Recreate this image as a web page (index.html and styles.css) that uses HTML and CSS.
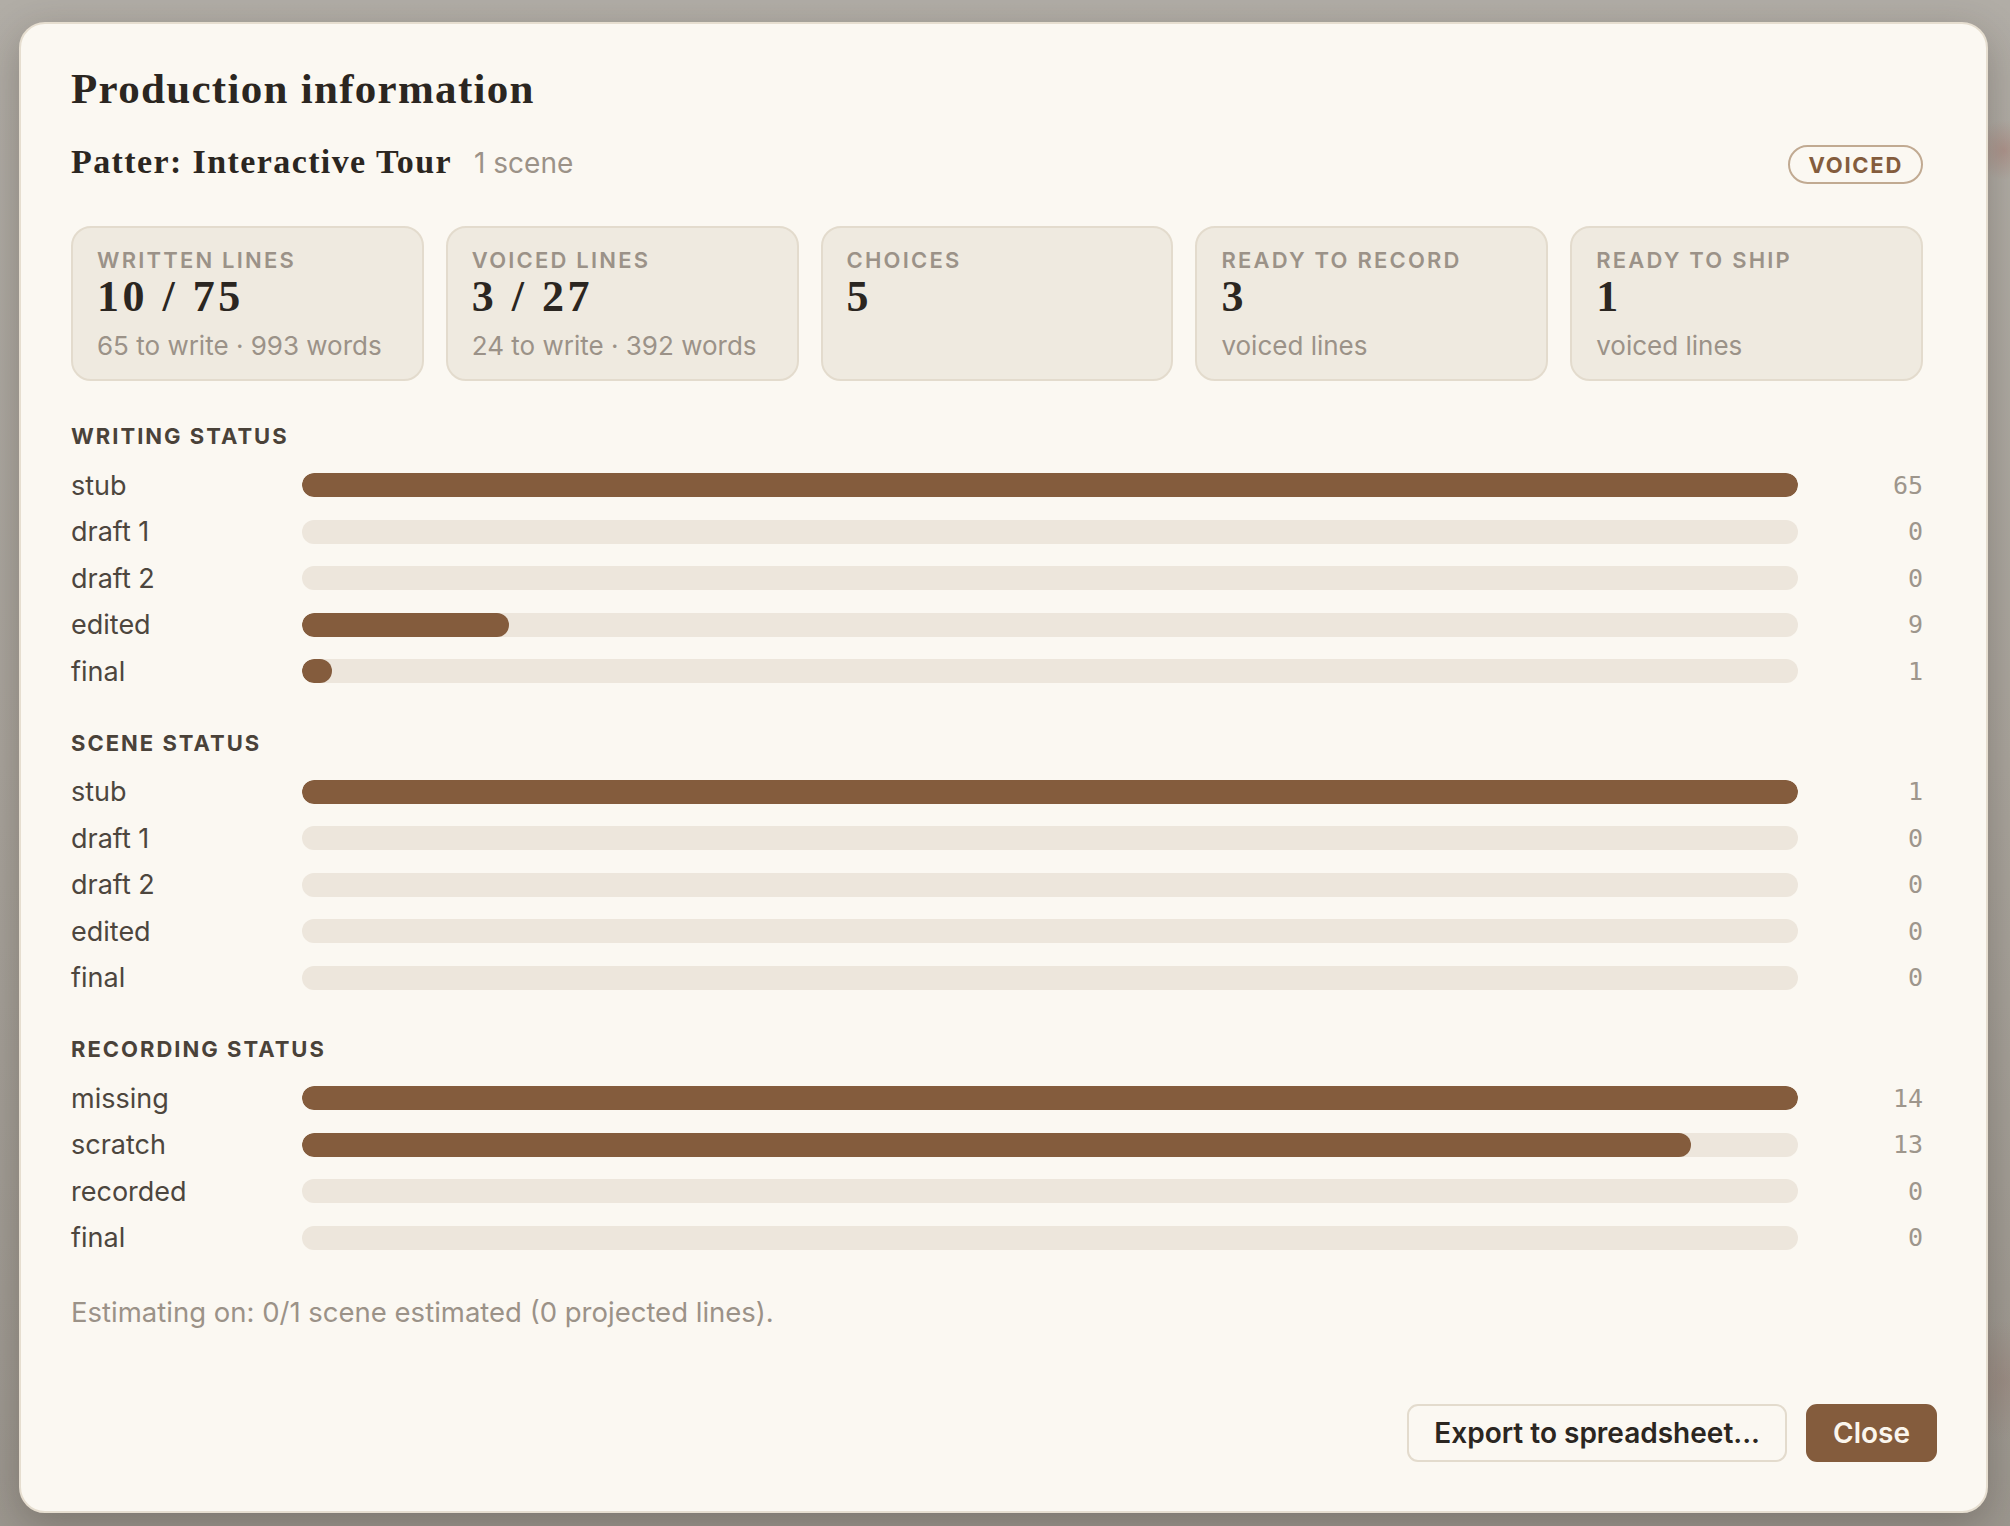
FILE: index.html
```html
<!DOCTYPE html>
<html lang="en">
<head>
    <meta charset="UTF-8">
    <meta name="viewport" content="width=device-width, initial-scale=1.0">
    <title>Production information</title>
    <link rel="stylesheet" href="styles.css">
</head>
<body>

    <div class="backdrop">
        <div class="dialog">
            <div class="dialog-body">
                <h1>Production information</h1>

                <!-- Project line -->
                <div class="project-row">
                    <div class="project">
                        <span class="project-name">Patter: Interactive Tour</span>
                        <span class="project-meta">1 scene</span>
                    </div>
                    <span class="badge">VOICED</span>
                </div>

                <!-- Summary cards -->
                <div class="cards">
                    <div class="card">
                        <div class="card-label">Written lines</div>
                        <div class="card-value">10 / 75</div>
                        <div class="card-sub">65 to write · 993 words</div>
                    </div>
                    <div class="card">
                        <div class="card-label">Voiced lines</div>
                        <div class="card-value">3 / 27</div>
                        <div class="card-sub">24 to write · 392 words</div>
                    </div>
                    <div class="card">
                        <div class="card-label">Choices</div>
                        <div class="card-value">5</div>
                    </div>
                    <div class="card">
                        <div class="card-label">Ready to record</div>
                        <div class="card-value">3</div>
                        <div class="card-sub">voiced lines</div>
                    </div>
                    <div class="card">
                        <div class="card-label">Ready to ship</div>
                        <div class="card-value">1</div>
                        <div class="card-sub">voiced lines</div>
                    </div>
                </div>

                <!-- Writing status -->
                <div class="section">
                    <h2>Writing status</h2>
                    <div class="row"><span class="row-label">stub</span><div class="track"><div class="fill" style="width: 100%"></div></div><span class="count">65</span></div>
                    <div class="row"><span class="row-label">draft 1</span><div class="track"><div class="fill" style="width: 0%"></div></div><span class="count">0</span></div>
                    <div class="row"><span class="row-label">draft 2</span><div class="track"><div class="fill" style="width: 0%"></div></div><span class="count">0</span></div>
                    <div class="row"><span class="row-label">edited</span><div class="track"><div class="fill" style="width: 13.85%"></div></div><span class="count">9</span></div>
                    <div class="row"><span class="row-label">final</span><div class="track"><div class="fill" style="width: 2%"></div></div><span class="count">1</span></div>
                </div>

                <!-- Scene status -->
                <div class="section">
                    <h2>Scene status</h2>
                    <div class="row"><span class="row-label">stub</span><div class="track"><div class="fill" style="width: 100%"></div></div><span class="count">1</span></div>
                    <div class="row"><span class="row-label">draft 1</span><div class="track"><div class="fill" style="width: 0%"></div></div><span class="count">0</span></div>
                    <div class="row"><span class="row-label">draft 2</span><div class="track"><div class="fill" style="width: 0%"></div></div><span class="count">0</span></div>
                    <div class="row"><span class="row-label">edited</span><div class="track"><div class="fill" style="width: 0%"></div></div><span class="count">0</span></div>
                    <div class="row"><span class="row-label">final</span><div class="track"><div class="fill" style="width: 0%"></div></div><span class="count">0</span></div>
                </div>

                <!-- Recording status -->
                <div class="section">
                    <h2>Recording status</h2>
                    <div class="row"><span class="row-label">missing</span><div class="track"><div class="fill" style="width: 100%"></div></div><span class="count">14</span></div>
                    <div class="row"><span class="row-label">scratch</span><div class="track"><div class="fill" style="width: 92.86%"></div></div><span class="count">13</span></div>
                    <div class="row"><span class="row-label">recorded</span><div class="track"><div class="fill" style="width: 0%"></div></div><span class="count">0</span></div>
                    <div class="row"><span class="row-label">final</span><div class="track"><div class="fill" style="width: 0%"></div></div><span class="count">0</span></div>
                </div>

                <p class="estimate">Estimating on: 0/1 scene estimated (0 projected lines).</p>
            </div>

            <div class="dialog-footer">
                <button class="btn btn-secondary">Export to spreadsheet...</button>
                <button class="btn btn-primary">Close</button>
            </div>
        </div>
    </div>

</body>
</html>
```

FILE: styles.css
```css
body {
    margin: 0;
    padding: 0;
    font-family: Inter, "Noto Sans", sans-serif;
    background-color: #a8a39b;
}
.backdrop {
    box-sizing: border-box;
    width: 2010px;
    height: 1526px;
    padding: 22px 22px 13px 19px;
    background:
        radial-gradient(circle at 2004px 150px, rgba(170, 120, 110, 0.45), transparent 30px),
        radial-gradient(circle at 2004px 1380px, rgba(150, 120, 110, 0.35), transparent 60px),
        linear-gradient(180deg, #b1ada6 0%, #a9a49c 50%, #9c978f 100%);
}
.dialog {
    box-sizing: border-box;
    height: 1491px;
    display: flex;
    flex-direction: column;
    background-color: #fbf8f2;
    border: 2px solid #e6ded0;
    border-radius: 26px;
    box-shadow: 0 12px 40px rgba(40, 30, 20, 0.28);
}
.dialog-body {
    flex: 1;
    padding: 40px 63px 0 50px;
}
h1 {
    margin: 0;
    font-family: "Liberation Serif", serif;
    font-size: 43px;
    line-height: 50px;
    font-weight: bold;
    letter-spacing: 1.3px;
    color: #2b2621;
}
.project-row {
    display: flex;
    justify-content: space-between;
    align-items: baseline;
    margin-top: 28px;
}
.project {
    display: flex;
    align-items: baseline;
}
.project-name {
    font-family: "Liberation Serif", serif;
    font-size: 34px;
    line-height: 40px;
    font-weight: bold;
    letter-spacing: 1.4px;
    color: #2b2621;
}
.project-meta {
    margin-left: 22px;
    font-size: 28px;
    color: #9b9288;
}
.badge {
    padding: 4px 18px 3px 19px;
    border: 2px solid #c1aa92;
    border-radius: 999px;
    font-size: 22px;
    line-height: 28px;
    font-weight: 700;
    letter-spacing: 1.7px;
    color: #845c3d;
}
.cards {
    display: grid;
    grid-template-columns: repeat(5, 1fr);
    gap: 22px;
    margin-top: 42px;
}
.card {
    padding: 19px 24px 17px 24px;
    background-color: #efeae0;
    border: 2px solid #e3dbcd;
    border-radius: 20px;
}
.card-label {
    font-size: 22px;
    line-height: 26px;
    font-weight: 600;
    letter-spacing: 2.2px;
    text-transform: uppercase;
    color: #9b9288;
}
.card-value {
    font-family: "Liberation Serif", serif;
    font-size: 44px;
    line-height: 48px;
    font-weight: bold;
    letter-spacing: 3.5px;
    color: #2b2621;
}
.card-sub {
    margin-top: 9px;
    font-size: 26px;
    line-height: 32px;
    color: #9b9288;
}
.section {
    margin-top: 42px;
}
.section + .section {
    margin-top: 35px;
}
h2 {
    margin: 0 0 13px 0;
    font-size: 22px;
    line-height: 26px;
    font-weight: 700;
    letter-spacing: 2px;
    text-transform: uppercase;
    color: #4a4239;
}
.row {
    display: grid;
    grid-template-columns: 231px 1fr 125px;
    align-items: center;
    height: 46.5px;
}
.row-label {
    font-size: 27px;
    color: #4d463e;
}
.track {
    height: 24px;
    border-radius: 12px;
    background-color: #ede6dc;
    overflow: hidden;
}
.fill {
    height: 100%;
    border-radius: 12px;
    background-color: #845c3d;
}
.count {
    text-align: right;
    font-family: "DejaVu Sans Mono", monospace;
    font-size: 25px;
    color: #9e968c;
}
.estimate {
    margin: 35px 0 0 0;
    font-size: 27.5px;
    line-height: 32px;
    color: #9b9288;
}
.dialog-footer {
    display: flex;
    justify-content: flex-end;
    gap: 19px;
    padding: 0 49px 49px 50px;
}
.btn {
    height: 58px;
    padding: 0 25px;
    border-radius: 11px;
    font-family: Inter, "Noto Sans", sans-serif;
    font-size: 28px;
    font-weight: 600;
    cursor: pointer;
}
.btn-secondary {
    background-color: #fbf8f2;
    border: 2px solid #e3dbcd;
    color: #2b2621;
}
.btn-primary {
    background-color: #845c3d;
    border: 2px solid #845c3d;
    color: #fbf6ee;
}
```
